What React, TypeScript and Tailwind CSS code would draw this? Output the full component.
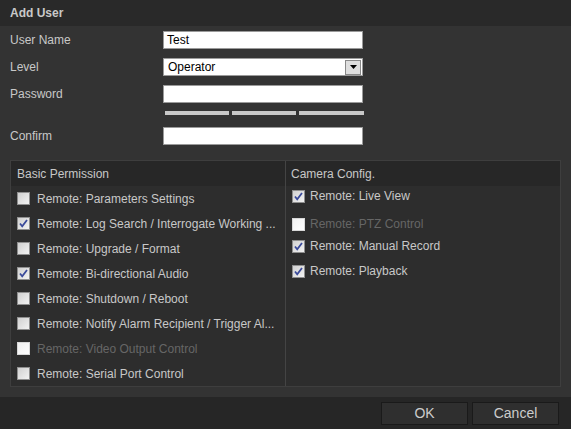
import React from "react";

function Check({ checked, disabled }: { checked?: boolean; disabled?: boolean }) {
  return (
    <svg width="13" height="13" viewBox="0 0 13 13" className="shrink-0">
      <defs>
        <linearGradient id={disabled ? "cbd" : "cb"} x1="0" y1="0" x2="1" y2="1">
          <stop offset="0" stopColor={disabled ? "#f0f0f0" : "#cfcfcf"} />
          <stop offset="1" stopColor={disabled ? "#ffffff" : "#f4f4f4"} />
        </linearGradient>
      </defs>
      <rect x="0.5" y="0.5" width="12" height="12" fill={`url(#${disabled ? "cbd" : "cb"})`} stroke={disabled ? "#d8d8d8" : "#8f8f8f"} />
      {checked && <path d="M3 6.5 L5.2 9.2 L10 3" fill="none" stroke="#3a4a9a" strokeWidth="1.8" />}
    </svg>
  );
}

const basic = [
  { t: "Remote: Parameters Settings" },
  { t: "Remote: Log Search / Interrogate Working ...", c: true },
  { t: "Remote: Upgrade / Format" },
  { t: "Remote: Bi-directional Audio", c: true },
  { t: "Remote: Shutdown / Reboot" },
  { t: "Remote: Notify Alarm Recipient / Trigger Al..." },
  { t: "Remote: Video Output Control", d: true },
  { t: "Remote: Serial Port Control" },
];

export default function App() {
  return (
    <div
      className="w-[571px] h-[429px] bg-[#333333] text-[#c8c8c8] text-[12px] flex flex-col overflow-hidden"
      style={{ fontFamily: '"Liberation Sans", Arial, sans-serif' }}
    >
      <div className="h-[26px] shrink-0 bg-[#292929] px-[10px] flex items-center font-bold">Add User</div>

      <div className="pt-[5px] pl-[10px]">
        <div className="flex items-center h-[18px]">
          <span className="w-[153px] -mt-[1px]">User Name</span>
          <div className="w-[200px] h-[18px] bg-white border border-[#9a9a9a] text-black px-[3px] flex items-center">Test</div>
        </div>
        <div className="flex items-center h-[18px] mt-[9px]">
          <span className="w-[153px]">Level</span>
          <div className="w-[200px] h-[18px] bg-white border border-[#9a9a9a] text-black pl-[4px] flex items-center justify-between">
            <span>Operator</span>
            <div className="w-[16px] h-[15px] mr-[1px] bg-[#dedede] border border-[#888] flex items-center justify-center">
              <svg width="7" height="4" viewBox="0 0 7 4"><path d="M0 0 H7 L3.5 4 Z" fill="#000" /></svg>
            </div>
          </div>
        </div>
        <div className="flex items-center h-[18px] mt-[9px]">
          <span className="w-[153px]">Password</span>
          <div className="w-[200px] h-[18px] bg-white border border-[#9a9a9a]" />
        </div>
        <div className="flex ml-[155px] mt-[8px] gap-[3px]">
          <div className="w-[64px] h-[4px] bg-[#c8c8c8]" />
          <div className="w-[64px] h-[4px] bg-[#c8c8c8]" />
          <div className="w-[65px] h-[4px] bg-[#c8c8c8]" />
        </div>
        <div className="flex items-center h-[18px] mt-[12px]">
          <span className="w-[153px]">Confirm</span>
          <div className="w-[200px] h-[18px] bg-white border border-[#9a9a9a]" />
        </div>
      </div>

      <div className="ml-[10px] mt-[15px] w-[551px] h-[227px] shrink-0 border border-[#3e3e3e] bg-[#2d2d2d] grid grid-cols-[275px_1fr]">
        <div className="border-r border-[#444444]">
          <div className="h-[25px] bg-[#272727] flex items-center pl-[6px]">Basic Permission</div>
          {basic.map((b) => (
            <div key={b.t} className="h-[25px] flex items-center pl-[6px] gap-[7px]">
              <Check checked={b.c} disabled={b.d} />
              <span className={b.d ? "text-[#666]" : ""}>{b.t}</span>
            </div>
          ))}
        </div>
        <div>
          <div className="h-[25px] bg-[#272727] flex items-center pl-[5px]">Camera Config.</div>
          <div className="h-[20px] flex items-center pl-[6px] gap-[5px]">
            <Check checked />
            <span>Remote: Live View</span>
          </div>
          <div className="h-[20px] mt-[8px] flex items-center pl-[6px] gap-[5px]">
            <Check disabled />
            <span className="text-[#666]">Remote: PTZ Control</span>
          </div>
          <div className="h-[20px] mt-[2px] flex items-center pl-[6px] gap-[5px]">
            <Check checked />
            <span>Remote: Manual Record</span>
          </div>
          <div className="h-[20px] mt-[5px] flex items-center pl-[6px] gap-[5px]">
            <Check checked />
            <span>Remote: Playback</span>
          </div>
        </div>
      </div>

      <div className="mt-[10px] flex-1 bg-[#262626] flex justify-end items-start pt-[5px] pr-[12px] gap-[4px]">
        <button className="w-[87px] h-[23px] bg-[#2f2f2f] border border-[#1a1a1a] text-[14px] text-[#cccccc]">OK</button>
        <button className="w-[87px] h-[23px] bg-[#2f2f2f] border border-[#1a1a1a] text-[14px] text-[#cccccc]">Cancel</button>
      </div>
    </div>
  );
}
